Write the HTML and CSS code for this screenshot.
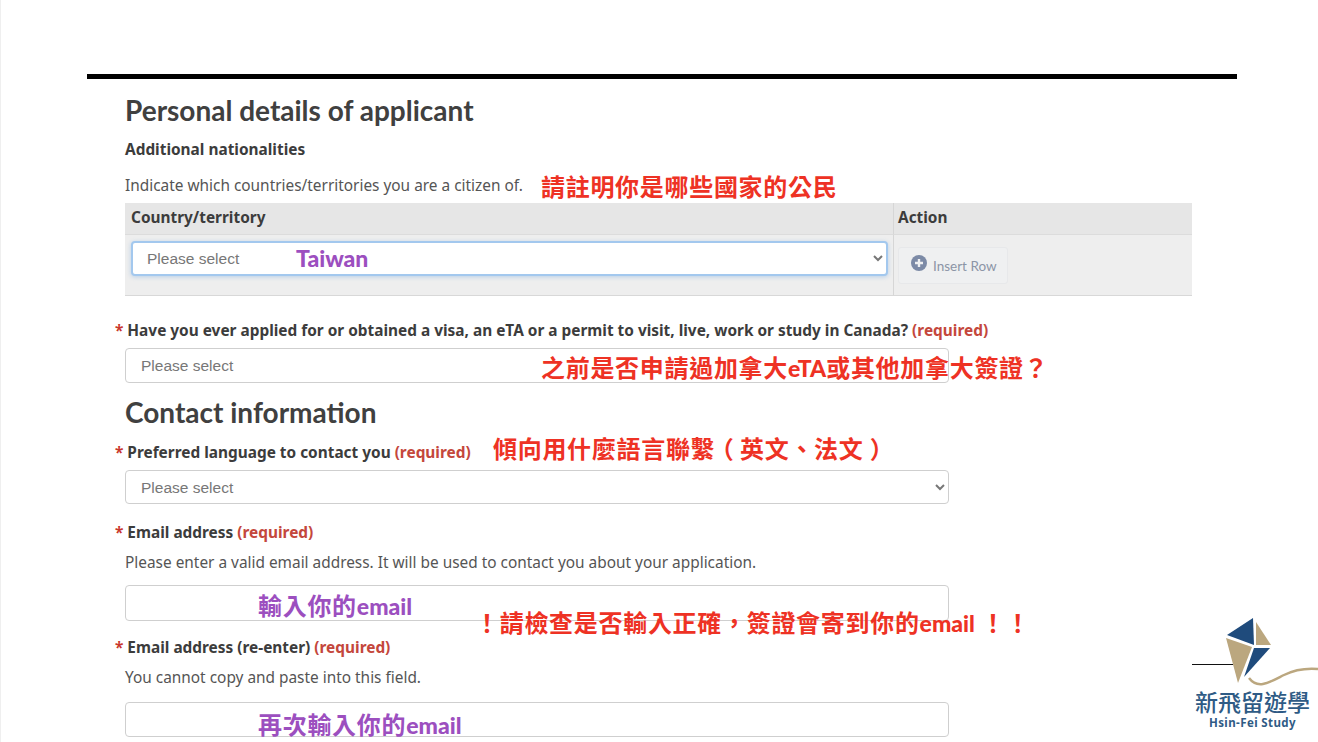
FILE: index.html
```html
<!DOCTYPE html>
<html lang="zh-Hant">
<head>
<meta charset="utf-8">
<title>Personal details of applicant</title>
<link rel="stylesheet" href="styles.css">
</head>
<body>
<div class="slide">
  <div class="rule"></div>
  <form class="form">
    <h1 class="title title-first">Personal details of applicant</h1>
    <div class="sub">Additional nationalities</div>
    <p class="help help-indicate">Indicate which countries/territories you are a citizen of.</p>
    <div class="table">
      <div class="th">Country/territory</div>
      <div class="th th-last">Action</div>
      <div class="td">
        <select class="select select-focus"><option>Please select</option></select>
      </div>
      <div class="td td-last">
        <button type="button" class="insert">
          <svg class="insert-icon" viewBox="0 0 16 16" width="16" height="16"><circle cx="8" cy="8" r="8" fill="#7c8aa6"/><path d="M8 4v8M4 8h8" stroke="#eff0f1" stroke-width="2.4"/></svg>
          <span class="insert-text">Insert Row</span>
        </button>
      </div>
    </div>
    <label class="label label-q1"><span class="star">*</span> Have you ever applied for or obtained a visa, an eTA or a permit to visit, live, work or study in Canada? <span class="req">(required)</span></label>
    <select class="select field field-q1 no-arrow"><option>Please select</option></select>
    <h2 class="title title-contact">Contact information</h2>
    <label class="label label-lang"><span class="star">*</span> Preferred language to contact you <span class="req">(required)</span></label>
    <select class="select field field-lang"><option>Please select</option></select>
    <label class="label label-email"><span class="star">*</span> Email address <span class="req">(required)</span></label>
    <p class="help help-email">Please enter a valid email address. It will be used to contact you about your application.</p>
    <input class="input input-email" type="text">
    <label class="label label-re"><span class="star">*</span> Email address (re-enter) <span class="req">(required)</span></label>
    <p class="help help-email">You cannot copy and paste into this field.</p>
    <input class="input input-re" type="text">
  </form>

  <span class="note red n1">請註明你是哪些國家的公民</span>
  <span class="note purple n2"><span class="latin">Taiwan</span></span>
  <span class="note red n3">之前是否申請過加拿大<span class="latin">eTA</span>或其他加拿大簽證？</span>
  <span class="note red n4">傾向用什麼語言聯繫<span class="punct">（</span>英文<span class="punct">、</span>法文<span class="punct">）</span></span>
  <span class="note purple n5">輸入你的<span class="latin">email</span></span>
  <span class="note red n6">！請檢查是否輸入正確<span class="punct">，</span>簽證會寄到你的<span class="latin">email</span> ！！</span>
  <span class="note purple n7">再次輸入你的<span class="latin">email</span></span>

  <div class="logo">
    <svg class="logo-mark" viewBox="0 0 126 80" width="126" height="80">
      <path d="M0 54.5H41" stroke="#111" stroke-width="1" fill="none"/>
      <path d="M35 25L61 8L62 35Z" fill="#1f4b7c"/>
      <path d="M64 12L79 35H64Z" fill="#bba77f"/>
      <path d="M34 28L60 37L46 73Z" fill="#bba77f"/>
      <path d="M62 38H78L52 67Z" fill="#1f4b7c"/>
      <path d="M57 68C66 80 78 72 92 65C104 59 114 58 126 59" stroke="#bba77f" stroke-width="2.5" fill="none"/>
    </svg>
    <div class="logo-zh">新飛留遊學</div>
    <div class="logo-en">Hsin-Fei Study</div>
  </div>
</div>
</body>
</html>
```
FILE: styles.css
```css
* { box-sizing: border-box; }
html, body { margin: 0; padding: 0; background: #fff; }
.slide {
  position: relative;
  width: 1318px;
  height: 742px;
  overflow: hidden;
  padding-top: 74px;
  border-left: 1px solid #efefef;
  font-family: "Noto Sans", sans-serif;
  color: #3c3c3c;
  text-spacing-trim: space-all;
}
.rule { width: 1150px; height: 5px; margin-left: 86px; background: #000; }
.form { display: flex; flex-direction: column; align-items: flex-start; padding-left: 124px; }
.title {
  margin: 0;
  font-family: Lato, sans-serif;
  font-weight: 700;
  font-size: 28px;
  line-height: 36px;
  color: #404040;
}
.title-first { margin-top: 13px; }
.title-contact { margin-top: 11px; }
.sub { margin-top: 12px; font-size: 15.4px; font-weight: 700; line-height: 20px; }
.help { margin: 0; font-size: 15.4px; line-height: 20px; color: #555; }
.help-indicate { margin-top: 16px; }
.help-email { margin-top: 10px; }
.table {
  display: grid;
  grid-template-columns: 769px 298px;
  grid-template-rows: 32px 61px;
  margin-top: 7px;
}
.th {
  background: #e6e6e6;
  border-right: 1px solid #d6d6d6;
  border-bottom: 1px solid #dcdcdc;
  padding: 0 6px;
  font-size: 15.4px;
  font-weight: 700;
  line-height: 29px;
}
.th-last { border-right: 0; padding-left: 4px; }
.td {
  background: #eeeeee;
  border-right: 1px solid #d6d6d6;
  border-bottom: 1px solid #d8d8d8;
  padding: 6px 5px 0 6px;
}
.td-last { border-right: 0; padding: 12px 0 0 4px; }
.select {
  display: block;
  width: 757px;
  height: 35px;
  padding: 0 11px;
  background-color: #fff;
  border: 1px solid #cfcfcf;
  border-radius: 4px;
  font-family: "Liberation Sans", sans-serif;
  font-size: 15.5px;
  color: #777;
}
.select-focus {
  border: 2px solid #a3c8ee;
  padding: 0 10px;
  box-shadow: 0 1px 4px rgba(120, 170, 225, .45);
}
.field { width: 824px; padding: 0 11px; }
.no-arrow { appearance: none; -webkit-appearance: none; height: 35px; margin-top: 7px; padding: 0 15px; }
.field-lang { margin-top: 7px; height: 34px; }
.insert {
  display: flex;
  align-items: flex-start;
  gap: 6px;
  width: 110px;
  height: 37px;
  padding: 7px 0 0 12px;
  background: #eff0f1;
  border: 1px solid #e7e8ea;
  border-radius: 3px;
  font-family: Lato, sans-serif;
  font-size: 13.5px;
  color: #8c95a6;
}
.insert-icon { flex: none; }
.insert-text { line-height: 22px; }
.label { display: block; margin-left: -10px; font-size: 15.4px; font-weight: 700; line-height: 20px; white-space: nowrap; }
.star { color: #c9372c; }
.req { color: #c4473c; }
.label-q1 { margin-top: 25px; }
.label-lang { margin-top: 13px; }
.label-email { margin-top: 19px; }
.label-re { margin-top: 17px; }
.input {
  display: block;
  width: 824px;
  background: #fff;
  border: 1px solid #cfcfcf;
  border-radius: 4px;
}
.input-email { margin-top: 12px; height: 36px; }
.input-re { margin-top: 14px; height: 35px; }
.note {
  position: absolute;
  font-family: "Noto Sans CJK TC", sans-serif;
  font-weight: 700;
  font-size: 24px;
  line-height: 30px;
  letter-spacing: .7px;
  white-space: nowrap;
}
.latin { font-family: Lato, sans-serif; font-weight: 900; font-size: 23px; letter-spacing: 0; }
.punct { display: inline-block; width: 24.7px; text-align: center; font-feature-settings: "halt"; letter-spacing: 0; }
.red { color: #ee3224; }
.purple { color: #9c4fbf; }
.n1 { left: 540px; top: 171px; }
.n2 { left: 295px; top: 242px; }
.n3 { left: 540px; top: 352px; }
.n4 { left: 492px; top: 433px; }
.n5 { left: 257px; top: 590px; }
.n6 { left: 474px; top: 607px; }
.n7 { left: 257px; top: 709px; }
.logo {
  position: absolute;
  left: 1191px;
  top: 610px;
  width: 126px;
  height: 125px;
  color: #2f5b85;
}
.logo-mark { display: block; }
.logo-zh {
  margin-top: -1px;
  padding-left: 3px;
  font-family: "Noto Sans CJK TC", sans-serif;
  font-weight: 500;
  font-size: 23px;
  line-height: 24px;
  white-space: nowrap;
}
.logo-en {
  padding-left: 17px;
  margin-top: 3px;
  font-family: "Noto Sans", sans-serif;
  font-size: 11.5px;
  font-weight: 700;
  line-height: 14px;
  letter-spacing: .4px;
  white-space: nowrap;
}
```
